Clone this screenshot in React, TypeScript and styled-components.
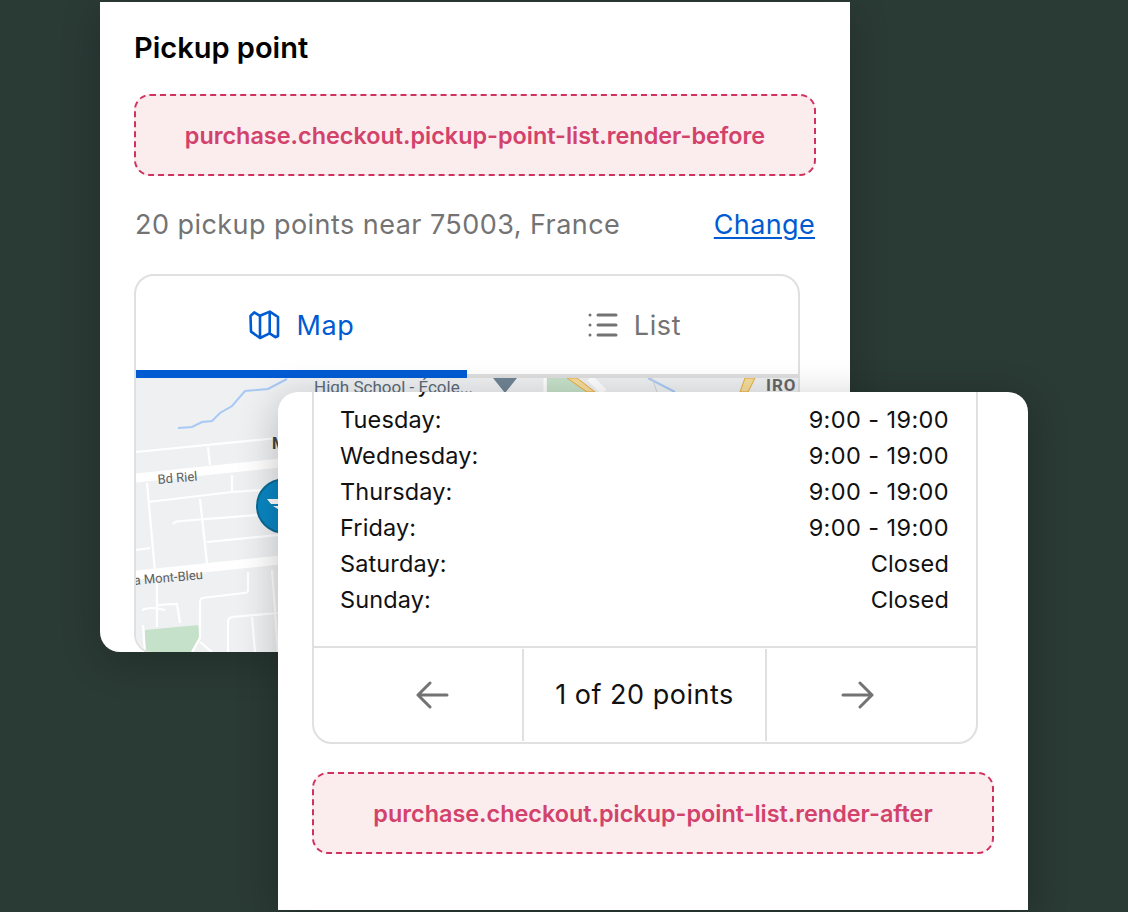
import * as React from "react";
import styled, { createGlobalStyle } from "styled-components";

const GlobalStyle = createGlobalStyle`
  html, body {
    margin: 0;
    height: 100%;
    background-color: #2a3a35;
    font-family: Inter, "Liberation Sans", sans-serif;
  }
`;

const Stage = styled.div`
  position: relative;
  width: 1128px;
  height: 912px;
  overflow: hidden;
`;

const Window = styled.section`
  position: absolute;
  box-sizing: border-box;
  display: flex;
  flex-direction: column;
  width: 750px;
  padding: 0 34px;
  background-color: #fff;
  overflow: hidden;
`;

const PickupWindow = styled(Window)`
  left: 100px;
  top: 2px;
  height: 650px;
  border-radius: 0 0 20px 20px;
  box-shadow: 0 10px 40px rgba(0, 0, 0, 0.2);
`;

const HoursWindow = styled(Window)`
  left: 278px;
  top: 392px;
  height: 518px;
  justify-content: flex-end;
  border-radius: 20px 20px 0 0;
  box-shadow: 0 8px 40px rgba(0, 0, 0, 0.24);
`;

const Title = styled.h2`
  margin: 27px 0 28px;
  font-size: 29px;
  line-height: 37px;
  font-weight: 600;
  color: #000;
`;

const Slot = styled.div`
  box-sizing: border-box;
  flex: none;
  display: flex;
  align-items: center;
  justify-content: center;
  width: 682px;
  height: 82px;
  padding-top: 1px;
  border: 2px dashed #d0325f;
  border-radius: 16px;
  background-color: #fbecee;
  color: #d2426b;
  font-size: 23.4px;
  font-weight: 600;
`;

const LocationRow = styled.div`
  display: flex;
  align-items: center;
  justify-content: space-between;
  box-sizing: border-box;
  width: 681px;
  margin: 31px 0 31px;
  padding-left: 1px;
  font-size: 27px;
  line-height: 36px;
  letter-spacing: 0.45px;
  color: #737373;
`;

const ChangeLink = styled.a`
  color: #005bd3;
  text-decoration: underline;
  text-underline-offset: 3px;
  text-decoration-thickness: 2px;
  letter-spacing: 0.35px;
`;

const Box = styled.div`
  box-sizing: border-box;
  flex: none;
  width: 666px;
  border: 2px solid #e0e0e0;
  border-radius: 20px;
  overflow: hidden;
`;

const Tabs = styled.div`
  display: flex;
  height: 102px;
`;

const Tab = styled.div<{ $active?: boolean }>`
  flex: 0 0 50%;
  box-sizing: border-box;
  display: flex;
  align-items: center;
  justify-content: center;
  gap: 16px;
  padding: ${(p) => (p.$active ? "4px 0 0" : "0 0 0 4px")};
  border-bottom: ${(p) => (p.$active ? "8px solid #005bd3" : "4px solid #dedede")};
  font-size: 27px;
  letter-spacing: 0.6px;
  color: ${(p) => (p.$active ? "#005bd3" : "#737373")};
`;

const MapSvg = styled.svg`
  display: block;
  width: 662px;
  height: 274px;
  background-color: #eef0f2;
`;

const Hours = styled.div`
  padding: 0 27px 28px 26px;
`;

const HoursRow = styled.div`
  display: flex;
  justify-content: space-between;
  font-size: 23.5px;
  line-height: 36px;
  letter-spacing: 0.12px;
  color: #111;
`;

const Time = styled.span<{ $open: boolean }>`
  letter-spacing: ${(p) => (p.$open ? "0.4px" : "0.15px")};
`;

const Pager = styled.div`
  display: grid;
  grid-template-columns: 208px 1fr 209px;
  height: 94px;
  border-top: 2px solid #e0e0e0;
`;

const PagerButton = styled.div<{ $side: "prev" | "next" }>`
  display: flex;
  align-items: center;
  justify-content: center;
  padding-left: ${(p) => (p.$side === "prev" ? "28px" : "0")};
  padding-right: ${(p) => (p.$side === "next" ? "28px" : "0")};
`;

const PagerLabel = styled.div`
  display: flex;
  align-items: center;
  justify-content: center;
  margin: 1px 0;
  padding-bottom: 2px;
  border-left: 2px solid #e0e0e0;
  border-right: 2px solid #e0e0e0;
  font-size: 27px;
  letter-spacing: 0.5px;
  color: #111;
`;

const AfterSlot = styled(Slot)`
  margin: 28px 0 56px;
`;

const MapIcon = () => (
  <svg width="32" height="32" viewBox="0 0 32 32" fill="none" stroke="#005bd3" strokeWidth="2.6" strokeLinejoin="round">
    <path d="M1.5 7 5.2 3.4 11 6.8 20.8 2.6 29 8v19l-2.6 1.2-5.8-3.8-9.6 4.6-9-6.4z" />
    <path d="M11 6.8V29M20.7 2.6v21.8" />
  </svg>
);

const ListIcon = () => (
  <svg width="30" height="26" viewBox="0 0 30 26" fill="none" stroke="#737373" strokeWidth="3" strokeLinecap="round">
    <path d="M10 3h18M10 13h18M10 23h18" />
    <path d="M2 3h.01M2 13h.01M2 23h.01" />
  </svg>
);

const ArrowIcon = ({ flip }: { flip?: boolean }) => (
  <svg width="34" height="28" viewBox="0 0 34 28" fill="none" stroke="#737373" strokeWidth="3" strokeLinecap="round" strokeLinejoin="round" style={flip ? { transform: "scaleX(-1)" } : undefined}>
    <path d="M32 14H3M15 2 3 14l12 12" />
  </svg>
);

const thinRoads = [
  "M136 452 278 438",
  "M208 447l2 18",
  "M147 483l8 89",
  "M148 502 232 492 278 489",
  "M232 475v17",
  "M200 499l7 64",
  "M173 524q2-3 8-3L258 515",
  "M207 542 278 535",
  "M136 550l14-2",
  "M157 572v55",
  "M142 610q8-4 23 0M157 605l20-1 3 19",
  "M248 572v18q0 3-4 3L202 598q-2 1-2 6v34l-8 14",
  "M200 642l12 10",
  "M228 652v-30q0-4 4-5l46-4",
  "M252 617l3 35",
  "M272 570l6 82",
  "M143 625l2 27",
];

const MapDrawing = () => (
  <MapSvg viewBox="136 378 662 274">
    <path d="M145 630 198 625 200 635 192 652H145z" fill="#c6e1c9" />
    <path d="M178 428l14-1 10-5 10-1 8-8 12-7 13-15 23-2 19-10" fill="none" stroke="#a9c9f5" strokeWidth="2" />
    <g fill="none" stroke="#fff">
      <g strokeWidth="2.2">
        {thinRoads.map((d) => (
          <path key={d} d={d} />
        ))}
      </g>
      <path d="M136 478 280 463M136 575 280 560" strokeWidth="9" />
      <path d="M545 378v14" strokeWidth="3" />
      <path d="M590 378 604 392" strokeWidth="7" />
    </g>
    <path d="M547 378h21l19 14H547z" fill="#c6e1c9" />
    <path d="M567 378h10l18 14h-8z" fill="#f6dd9a" stroke="#e8a93c" strokeWidth="1" />
    <path d="M745 378h10l-7 14h-8z" fill="#f6dd9a" stroke="#e8a93c" strokeWidth="1" />
    <path d="M648 378 675 392" stroke="#a9c9f5" strokeWidth="2" />
    <path d="M652 378 657 392" stroke="#cfd2d6" strokeWidth="1" />
    <path d="M493 378h24l-12 15z" fill="#6f8494" />
    <circle cx="283.5" cy="506" r="26.5" fill="#0a86c2" stroke="#0b6a94" strokeWidth="2" />
    <path d="M267 499h20l-3 5h-13zM273 506h11l-3 5z" fill="#fff" />
    <g fontFamily="Roboto, sans-serif">
      <text x="314" y="393" fontSize="17" fill="#5b6b78">High School - École...</text>
      <text x="766" y="391" fontSize="17" fontWeight="700" letterSpacing="1" fill="#666">IRO</text>
      <text x="272" y="449" fontSize="16" fontWeight="700" fill="#444">M</text>
      <text x="158" y="484" fontSize="13" fill="#5f5f5f" transform="rotate(-5 158 484)">Bd Riel</text>
      <text x="134" y="585" fontSize="13" fill="#5f5f5f" transform="rotate(-5 134 585)">a Mont-Bleu</text>
    </g>
  </MapSvg>
);

const hours = [
  { day: "Monday:", time: "9:00 - 19:00" },
  { day: "Tuesday:", time: "9:00 - 19:00" },
  { day: "Wednesday:", time: "9:00 - 19:00" },
  { day: "Thursday:", time: "9:00 - 19:00" },
  { day: "Friday:", time: "9:00 - 19:00" },
  { day: "Saturday:", time: "Closed" },
  { day: "Sunday:", time: "Closed" },
];

export default function App() {
  return (
    <Stage>
      <GlobalStyle />
      <PickupWindow>
        <Title>Pickup point</Title>
        <Slot>purchase.checkout.pickup-point-list.render-before</Slot>
        <LocationRow>
          <span>20 pickup points near 75003, France</span>
          <ChangeLink>Change</ChangeLink>
        </LocationRow>
        <Box>
          <Tabs>
            <Tab $active>
              <MapIcon />
              Map
            </Tab>
            <Tab>
              <ListIcon />
              List
            </Tab>
          </Tabs>
          <MapDrawing />
        </Box>
      </PickupWindow>
      <HoursWindow>
        <Box>
          <Hours>
            {hours.map((row) => (
              <HoursRow key={row.day}>
                <span>{row.day}</span>
                <Time $open={row.time !== "Closed"}>{row.time}</Time>
              </HoursRow>
            ))}
          </Hours>
          <Pager>
            <PagerButton $side="prev">
              <ArrowIcon />
            </PagerButton>
            <PagerLabel>1 of 20 points</PagerLabel>
            <PagerButton $side="next">
              <ArrowIcon flip />
            </PagerButton>
          </Pager>
        </Box>
        <AfterSlot>purchase.checkout.pickup-point-list.render-after</AfterSlot>
      </HoursWindow>
    </Stage>
  );
}
